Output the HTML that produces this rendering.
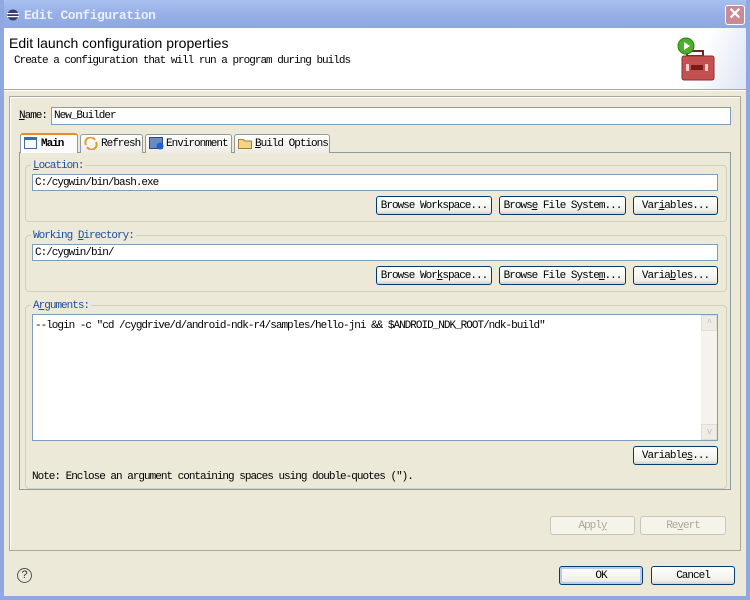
<!DOCTYPE html>
<html><head><style>
*{box-sizing:border-box;margin:0;padding:0}
body{width:750px;height:600px;overflow:hidden;background:#ECE9D8;position:relative;font-family:"Liberation Mono","Noto Sans CJK SC",monospace;font-size:11px;letter-spacing:-1px;color:#000}
.a{position:absolute}
.t{white-space:nowrap;line-height:13px}
.fld{position:absolute;background:#fff;border:1px solid #7F9DB9;padding-left:2px;line-height:16px;white-space:nowrap}
.grp{position:absolute;border:1px solid #D0D0BF;border-radius:4px}
.gl{position:absolute;background:#ECE9D8;color:#1C4FA0;padding:0 2px;line-height:12px;top:-6px;left:5px;white-space:nowrap}
.btn{position:absolute;border:1px solid #003C74;border-radius:3px;background:linear-gradient(#fff,#F0F0EA 80%,#D6D0C5);text-align:center;line-height:19px;white-space:nowrap}
.dis{border-color:#C9C7BA;color:#ACA899;background:#F5F4EA}
.tab{position:absolute;top:134px;height:19px;border:1px solid #919B9C;border-bottom:none;border-radius:3px 3px 0 0;background:linear-gradient(#fff,#ECEBE6);line-height:18px;padding-left:20px;white-space:nowrap;overflow:hidden}
</style></head><body>
<div class="a" style="left:0;top:0;width:750px;height:28px;background:linear-gradient(#A9C0EE,#96AFE6 50%,#8FA8E2);border-radius:6px 6px 0 0"></div>
<div class="a" style="left:0;top:0;width:4px;height:600px;background:#8FA8E2"></div>
<div class="a" style="left:746px;top:0;width:4px;height:600px;background:#8FA8E2"></div>
<div class="a" style="left:0;top:596px;width:750px;height:4px;background:#8FA8E2"></div>
<svg class="a" style="left:7px;top:9px" width="12" height="12"><circle cx="6" cy="6" r="5.5" fill="#3a3a7a"/><rect x="0" y="4" width="12" height="1.2" fill="#fff"/><rect x="0" y="7" width="12" height="1.2" fill="#fff"/></svg>
<div class="a t" style="left:24px;top:9px;color:#E8EEFC;font-size:13px;font-weight:bold;letter-spacing:-0.5px">Edit Configuration</div>
<div class="a" style="left:725px;top:5px;width:20px;height:20px;border:1px solid #fff;border-radius:3px;background:#C98A95;color:#fff;text-align:center;font:bold 16px/18px 'Liberation Sans',sans-serif;letter-spacing:0">✕</div>
<div class="a" style="left:4px;top:28px;width:742px;height:62px;background:#fff"></div>
<div class="a" style="left:640px;top:28px;width:106px;height:62px;background:linear-gradient(110deg,#fff 55%,#DDE4F4)"></div>
<div class="a t" style="left:9px;top:35px;font:14px 'Liberation Sans','Noto Sans CJK SC',sans-serif;letter-spacing:0">Edit launch configuration properties</div>
<div class="a t" style="left:14px;top:55px">Create a configuration that will run a program during builds</div>
<svg class="a" style="left:676px;top:36px" width="42" height="48"><rect x="11" y="15" width="16" height="5" fill="none" stroke="#6a2a2a" stroke-width="2"/><rect x="6" y="20" width="32" height="24" rx="2" fill="#C45050" stroke="#8a3030"/><rect x="15" y="29" width="12" height="5" fill="#7a1a1a"/><rect x="10" y="28" width="3" height="7" fill="#f0d0d0"/><rect x="29" y="28" width="3" height="7" fill="#f0d0d0"/><circle cx="10" cy="10" r="8" fill="#4CAF2A" stroke="#2E7D1A"/><path d="M8 6 L14 10 L8 14Z" fill="#fff"/></svg>
<div class="a" style="left:4px;top:89px;width:742px;height:2px;background:#ACA899;border-bottom:1px solid #fff"></div>
<div class="a" style="left:9px;top:96px;width:732px;height:455px;border:1px solid #ACA899;box-shadow:inset 1px 1px #fff"></div>
<div class="a t" style="left:19px;top:110px"><u>N</u>ame:</div>
<div class="fld" style="left:51px;top:107px;width:680px;height:18px">New_Builder</div>
<div class="a" style="left:19px;top:152px;width:712px;height:338px;border:1px solid #919B9C;background:#ECE9D8"></div>
<div class="tab" style="left:20px;width:58px;top:133px;height:20px;background:#FCFCFE;border-top:2px solid #E68B2C;z-index:2"><b>Main</b></div>
<div class="tab" style="left:80px;width:63px">Refresh</div>
<div class="tab" style="left:145px;width:87px">Environment</div>
<div class="tab" style="left:234px;width:96px"><u>B</u>uild Options</div>
<svg class="a" style="left:24px;top:137px;z-index:3" width="13" height="12"><rect x=".5" y=".5" width="12" height="11" fill="#fff" stroke="#3A6EA5"/><rect x="1" y="1" width="11" height="2" fill="#3A6EA5"/></svg>
<svg class="a" style="left:84px;top:137px" width="14" height="13"><path d="M2 8a5 5 0 0 1 9-5M12 5a5 5 0 0 1-9 5" fill="none" stroke="#E0A020" stroke-width="2"/></svg>
<svg class="a" style="left:149px;top:137px" width="15" height="13"><rect x=".5" y=".5" width="13" height="11" fill="#6A8BC0" stroke="#2A4A80"/><circle cx="11" cy="9" r="3.5" fill="#2060D0"/></svg>
<svg class="a" style="left:238px;top:138px" width="15" height="11"><path d="M.5 1.5h5l1 1.5h7v7.5H.5z" fill="#F2D58A" stroke="#A08030"/></svg>
<div class="grp" style="left:25px;top:165px;width:702px;height:57px"><span class="gl"><u>L</u>ocation:</span></div>
<div class="fld" style="left:32px;top:174px;width:686px;height:17px">C:/cygwin/bin/bash.exe</div>
<div class="btn" style="left:376px;top:196px;width:116px;height:19px">Browse Workspace...</div>
<div class="btn" style="left:499px;top:196px;width:127px;height:19px">Brows<u>e</u> File System...</div>
<div class="btn" style="left:633px;top:196px;width:85px;height:19px">Var<u>i</u>ables...</div>
<div class="grp" style="left:25px;top:235px;width:702px;height:57px"><span class="gl">Working <u>D</u>irectory:</span></div>
<div class="fld" style="left:32px;top:244px;width:686px;height:17px">C:/cygwin/bin/</div>
<div class="btn" style="left:376px;top:266px;width:116px;height:19px">Browse Wor<u>k</u>space...</div>
<div class="btn" style="left:499px;top:266px;width:127px;height:19px">Browse File Syste<u>m</u>...</div>
<div class="btn" style="left:633px;top:266px;width:85px;height:19px">Varia<u>b</u>les...</div>
<div class="grp" style="left:25px;top:305px;width:702px;height:184px"><span class="gl">A<u>r</u>guments:</span></div>
<div class="fld" style="left:32px;top:314px;width:686px;height:127px;padding-top:3px">--login -c "cd /cygdrive/d/android-ndk-r4/samples/hello-jni &amp;&amp; $ANDROID_NDK_ROOT/ndk-build"</div>
<div class="a" style="left:701px;top:315px;width:16px;height:125px;background:#F4F3EE"></div>
<div class="a" style="left:701px;top:315px;width:16px;height:16px;background:#EEEDE5;border:1px solid #E0DFD5;color:#C0C0C0;font-size:9px;text-align:center;line-height:14px">^</div>
<div class="a" style="left:701px;top:424px;width:16px;height:16px;background:#EEEDE5;border:1px solid #E0DFD5;color:#C0C0C0;font-size:9px;text-align:center;line-height:14px">v</div>
<div class="btn" style="left:633px;top:446px;width:85px;height:19px">Variable<u>s</u>...</div>
<div class="a t" style="left:32px;top:471px">Note: Enclose an argument containing spaces using double-quotes (").</div>
<div class="btn dis" style="left:550px;top:516px;width:85px;height:19px">Appl<u>y</u></div>
<div class="btn dis" style="left:640px;top:516px;width:86px;height:19px">Re<u>v</u>ert</div>
<div class="a" style="left:17px;top:568px;width:15px;height:15px;border:1px solid #555;border-radius:50%;text-align:center;line-height:13px;font:11px 'Liberation Sans',sans-serif;letter-spacing:0;color:#333">?</div>
<div class="btn" style="left:559px;top:566px;width:84px;height:19px;box-shadow:inset 0 0 0 2px #B8CCF0">OK</div>
<div class="btn" style="left:651px;top:566px;width:84px;height:19px">Cancel</div>
</body></html>
